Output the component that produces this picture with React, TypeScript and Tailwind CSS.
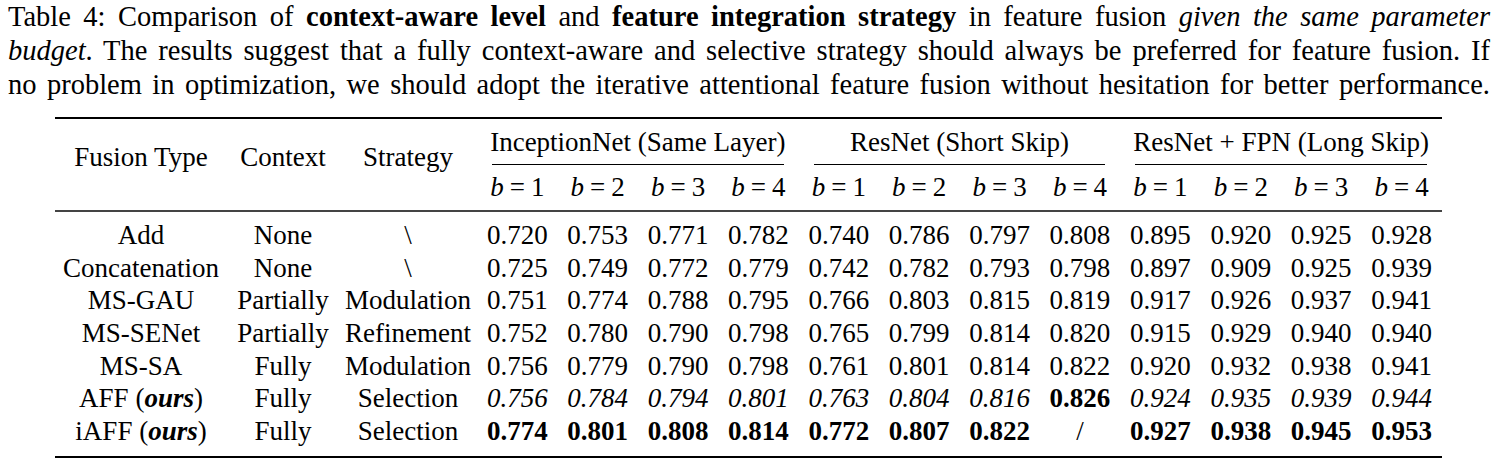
import React from "react";

const GROUPS = [
	"InceptionNet (Same Layer)",
	"ResNet (Short Skip)",
	"ResNet + FPN (Long Skip)",
];

type Cell = { v: string; s?: "i" | "b" | "n" };

const ROWS: { name: React.ReactNode; ctx: string; strat: string; vals: Cell[] }[] = [
	{ name: "Add", ctx: "None", strat: "\\", vals: ["0.720", "0.753", "0.771", "0.782", "0.740", "0.786", "0.797", "0.808", "0.895", "0.920", "0.925", "0.928"].map((v) => ({ v })) },
	{ name: "Concatenation", ctx: "None", strat: "\\", vals: ["0.725", "0.749", "0.772", "0.779", "0.742", "0.782", "0.793", "0.798", "0.897", "0.909", "0.925", "0.939"].map((v) => ({ v })) },
	{ name: "MS-GAU", ctx: "Partially", strat: "Modulation", vals: ["0.751", "0.774", "0.788", "0.795", "0.766", "0.803", "0.815", "0.819", "0.917", "0.926", "0.937", "0.941"].map((v) => ({ v })) },
	{ name: "MS-SENet", ctx: "Partially", strat: "Refinement", vals: ["0.752", "0.780", "0.790", "0.798", "0.765", "0.799", "0.814", "0.820", "0.915", "0.929", "0.940", "0.940"].map((v) => ({ v })) },
	{ name: "MS-SA", ctx: "Fully", strat: "Modulation", vals: ["0.756", "0.779", "0.790", "0.798", "0.761", "0.801", "0.814", "0.822", "0.920", "0.932", "0.938", "0.941"].map((v) => ({ v })) },
	{
		name: <>AFF (<b><i>ours</i></b>)</>,
		ctx: "Fully",
		strat: "Selection",
		vals: ["0.756", "0.784", "0.794", "0.801", "0.763", "0.804", "0.816"].map((v) => ({ v, s: "i" as const }))
			.concat([{ v: "0.826", s: "b" }])
			.concat(["0.924", "0.935", "0.939", "0.944"].map((v) => ({ v, s: "i" as const }))),
	},
	{
		name: <>iAFF (<b><i>ours</i></b>)</>,
		ctx: "Fully",
		strat: "Selection",
		vals: ["0.774", "0.801", "0.808", "0.814", "0.772", "0.807", "0.822"].map((v) => ({ v, s: "b" as const }))
			.concat([{ v: "/", s: "n" }])
			.concat(["0.927", "0.938", "0.945", "0.953"].map((v) => ({ v, s: "b" as const }))),
	},
];

const cellStyle = (s?: string) =>
	s === "i" ? "italic" : s === "b" ? "font-bold" : "";

export default function App() {
	return (
		<div className="w-[1500px] h-[469px] bg-white text-black [font-family:'Liberation_Serif',serif] overflow-hidden">
			<div className="pl-[8px] w-[1490px] text-[28.5px] leading-[34px]">
				<div className="text-justify [text-align-last:justify] whitespace-nowrap">
					Table 4: Comparison of <b>context-aware level</b> and <b>feature integration strategy</b> in feature fusion <i>given the same parameter</i>
				</div>
				<div className="text-justify [text-align-last:justify] whitespace-nowrap">
					<i>budget</i>. The results suggest that a fully context-aware and selective strategy should always be preferred for feature fusion. If
				</div>
				<div className="text-justify [text-align-last:justify] whitespace-nowrap">
					no problem in optimization, we should adopt the iterative attentional feature fusion without hesitation for better performance.
				</div>
			</div>

			<table className="ml-[55px] mt-[15px] w-[1387px] table-fixed border-collapse text-[27px]">
				<colgroup>
					<col className="w-[172px]" />
					<col className="w-[112px]" />
					<col className="w-[138px]" />
					{Array.from({ length: 12 }).map((_, i) => (
						<col key={i} className="w-[80.4px]" />
					))}
				</colgroup>
				<thead>
					<tr className="border-t-2 border-black">
						<th rowSpan={2} className="font-normal text-center align-middle pb-[14px] border-b-2 border-[#444]">Fusion Type</th>
						<th rowSpan={2} className="font-normal text-center align-middle pb-[14px] border-b-2 border-[#444]">Context</th>
						<th rowSpan={2} className="font-normal text-center align-middle pb-[14px] border-b-2 border-[#444]">Strategy</th>
						{GROUPS.map((g) => (
							<th key={g} colSpan={4} className="font-normal p-0 h-[47px] align-bottom">
								<div className="flex flex-col">
									<div className="leading-[32px] text-center whitespace-nowrap">{g}</div>
									<div className="mt-[6px] mx-[15px] h-px bg-black" />
								</div>
							</th>
						))}
					</tr>
					<tr className="border-b-2 border-[#444]">
						{GROUPS.map((g) =>
							[1, 2, 3, 4].map((n) => (
								<th key={g + n} className="font-normal h-[46px] p-0 text-center whitespace-nowrap">
									<i>b</i>
									<span className="mx-[6px]">=</span>
									{n}
								</th>
							))
						)}
					</tr>
				</thead>
				<tbody>
					{ROWS.map((row, ri) => {
						const pad = ri === 0 ? "pt-[7px]" : ri === ROWS.length - 1 ? "pb-[8px]" : "";
						return (
							<tr key={ri} className={ri === ROWS.length - 1 ? "border-b-2 border-black" : ""}>
								<td className={`p-0 ${pad} text-center leading-[32.67px] whitespace-nowrap`}>{row.name}</td>
								<td className={`p-0 ${pad} text-center leading-[32.67px]`}>{row.ctx}</td>
								<td className={`p-0 ${pad} text-center leading-[32.67px]`}>{row.strat}</td>
								{row.vals.map((c, ci) => (
									<td key={ci} className={`p-0 ${pad} text-center leading-[32.67px] ${cellStyle(c.s)}`}>
										{c.v}
									</td>
								))}
							</tr>
						);
					})}
				</tbody>
			</table>
		</div>
	);
}
